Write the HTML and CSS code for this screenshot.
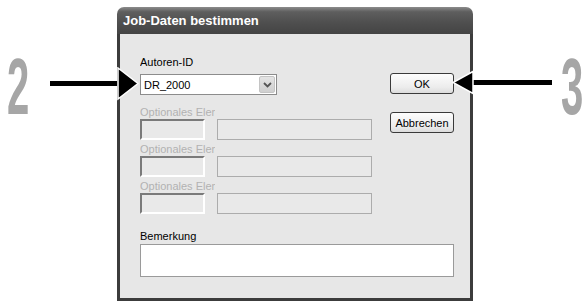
FILE: index.html
```html
<!DOCTYPE html>
<html lang="de">

<head>
    <meta charset="UTF-8">
    <meta name="viewport" content="width=device-width, initial-scale=1.0">
    <title>Job-Daten bestimmen</title>
    <link rel="stylesheet" href="styles.css">
</head>

<body>
    <div class="stage">
        <span class="step step-2">2</span>
        <span class="step step-3">3</span>

        <div class="dialog">
            <div class="titlebar">Job-Daten bestimmen</div>
            <div class="content">
                <div class="top">
                    <div class="fields">
                        <div class="label">Autoren-ID</div>
                        <div class="select">
                            <span class="select-value">DR_2000</span>
                            <span class="select-btn">
                                <svg width="9" height="6" viewBox="0 0 9 6"><path d="M1 1 L4.5 4.5 L8 1" fill="none" stroke="#555" stroke-width="1.8"/></svg>
                            </span>
                        </div>
                        <div class="opt-list">
                            <div class="opt-row">
                                <div class="label disabled">Optionales Element 1</div>
                                <div class="opt-boxes"><span class="box-small"></span><span class="box-wide"></span></div>
                            </div>
                            <div class="opt-row">
                                <div class="label disabled">Optionales Element 2</div>
                                <div class="opt-boxes"><span class="box-small"></span><span class="box-wide"></span></div>
                            </div>
                            <div class="opt-row">
                                <div class="label disabled">Optionales Element 3</div>
                                <div class="opt-boxes"><span class="box-small"></span><span class="box-wide"></span></div>
                            </div>
                        </div>
                    </div>
                    <div class="buttons">
                        <button class="btn">OK</button>
                        <button class="btn">Abbrechen</button>
                    </div>
                </div>
                <div class="remark">
                    <div class="label">Bemerkung</div>
                    <div class="textarea"></div>
                </div>
            </div>
        </div>

        <!-- Pfeile -->
        <svg class="arrow arrow-left" width="90" height="34" viewBox="0 0 90 34">
            <rect x="0" y="14" width="70" height="5" fill="#000"/>
            <polygon points="68,1 88,16.5 68,32" fill="#000" stroke="#fff" stroke-width="1.5"/>
        </svg>
        <svg class="arrow arrow-right" width="102" height="26" viewBox="0 0 102 26">
            <rect x="18" y="10" width="82" height="5" fill="#000"/>
            <polygon points="21,1.5 1,12.5 21,23.5" fill="#000" stroke="#fff" stroke-width="1.5"/>
        </svg>
    </div>
</body>

</html>
```

FILE: styles.css
```css
* {
    margin: 0;
    padding: 0;
    box-sizing: border-box;
}

body {
    background: #fff;
    font-family: "Liberation Sans", Arial, sans-serif;
    font-size: 11px;
    color: #000;
}

.stage {
    position: relative;
    width: 587px;
    height: 303px;
    padding: 7px 0 0 117px;
    overflow: hidden;
}

.step {
    position: absolute;
    top: 47px;
    font-size: 80px;
    font-weight: bold;
    line-height: 1;
    color: #a6a6a6;
    transform: scaleX(0.5);
    transform-origin: left top;
}

.step-2 {
    left: 7px;
}

.step-3 {
    left: 561px;
}

.arrow {
    position: absolute;
}

.arrow-left {
    left: 50px;
    top: 67px;
}

.arrow-right {
    left: 452px;
    top: 70px;
}

.dialog {
    width: 356px;
    height: 294px;
    display: flex;
    flex-direction: column;
}

.titlebar {
    height: 27px;
    padding-left: 6px;
    line-height: 28px;
    color: #fff;
    font-size: 13px;
    font-weight: bold;
    background: linear-gradient(#8c8c8c, #5e5e5e 18%, #4e4e4e 60%, #444 100%);
    border-radius: 7px 7px 0 0;
}

.content {
    flex: 1;
    background: #e7e7e7;
    border: 3px solid #3c3c3c;
    border-top: 0;
    padding: 22px 16px 0 20px;
}

.top {
    display: flex;
    justify-content: space-between;
}

.fields {
    width: 232px;
}

.label {
    height: 13px;
    line-height: 13px;
    white-space: nowrap;
    overflow: hidden;
}

.label.disabled {
    width: 75px;
    height: 14px;
    line-height: 14px;
    color: #b2b2b2;
}

.select {
    width: 137px;
    height: 21px;
    margin-top: 5px;
    display: flex;
    align-items: center;
    justify-content: space-between;
    background: #fff;
    border: 1px solid #8c8c8c;
    padding: 1px 1px 1px 3px;
}

.select-btn {
    width: 16px;
    height: 17px;
    display: flex;
    align-items: center;
    justify-content: center;
    background: linear-gradient(#e4e4e4, #cfcfcf);
    border: 1px solid #c4c4c4;
    border-radius: 2px;
}

.opt-list {
    margin-top: 10px;
    display: flex;
    flex-direction: column;
    gap: 2px;
}

.opt-boxes {
    display: flex;
    gap: 12px;
}

.box-small {
    width: 65px;
    height: 21px;
    border: 2px solid #fff;
    border-top-color: #7a7a7a;
    border-left-color: #7a7a7a;
    background: #e9e9e9;
}

.box-wide {
    width: 155px;
    height: 21px;
    border: 1px solid #acacac;
    background: #e9e9e9;
}

.buttons {
    padding-top: 17px;
    display: flex;
    flex-direction: column;
    gap: 18px;
}

.btn {
    width: 64px;
    height: 21px;
    font-family: "Liberation Sans", Arial, sans-serif;
    font-size: 11px;
    color: #000;
    background: linear-gradient(#fdfdfd, #ececec 70%, #dcdcdc);
    border: 1px solid #3a3a3a;
    border-radius: 3px;
}

.remark {
    margin-top: 16px;
}

.textarea {
    width: 314px;
    height: 33px;
    margin-top: 1px;
    background: #fff;
    border: 1px solid #9a9a9a;
}
```
